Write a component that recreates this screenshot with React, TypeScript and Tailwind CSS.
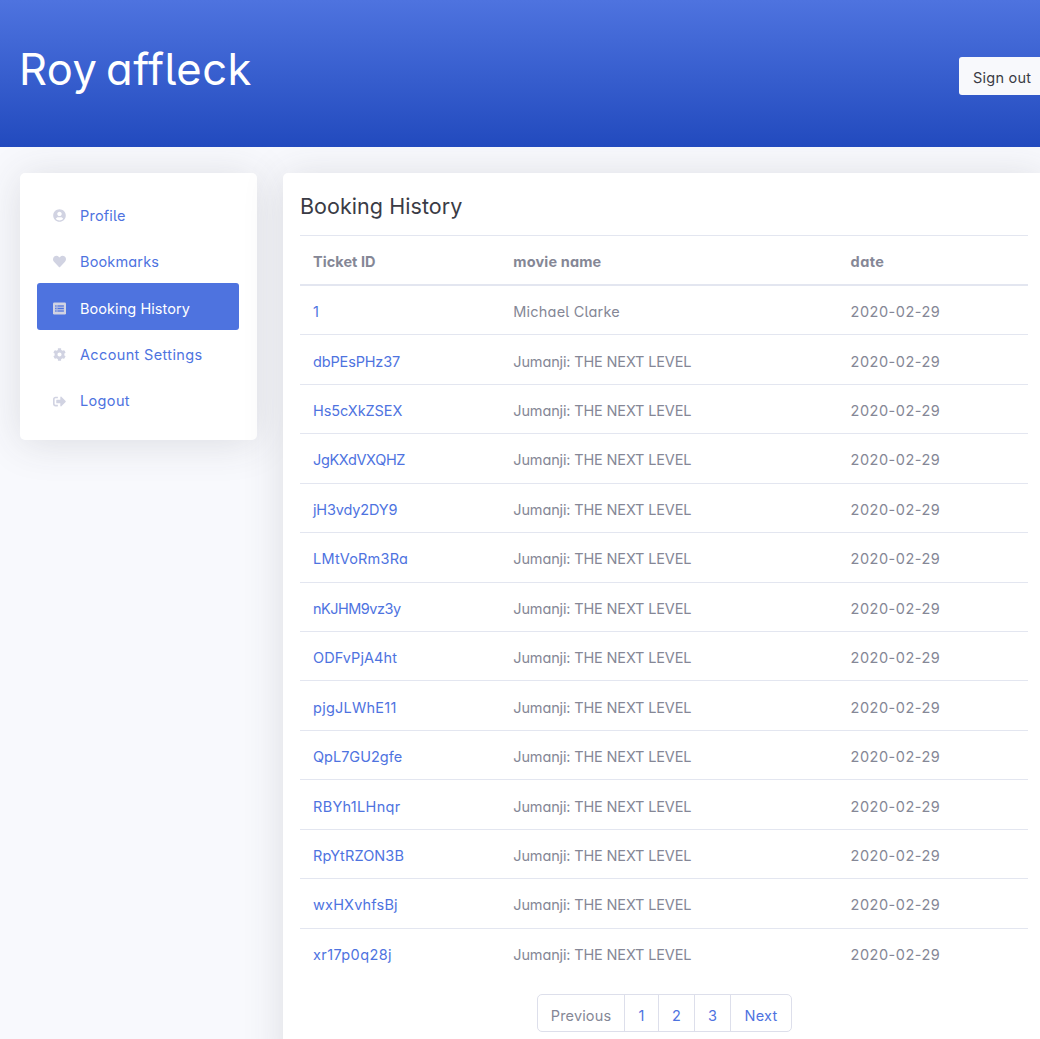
import { FaUserCircle, FaHeart, FaCog, FaSignOutAlt } from "react-icons/fa";

const menu = [
  { label: "Profile", icon: FaUserCircle, tracking: "tracking-[0.2px]" },
  { label: "Bookmarks", icon: FaHeart, tracking: "tracking-[0.15px]" },
  { label: "Booking History", icon: ListIcon, tracking: "tracking-[0.07px]", active: true },
  { label: "Account Settings", icon: FaCog, tracking: "tracking-[0.36px]" },
  { label: "Logout", icon: FaSignOutAlt, tracking: "tracking-[0.35px]" },
];

const tickets = [
  { id: "1", tracking: "tracking-normal" },
  { id: "dbPEsPHz37", tracking: "tracking-[-0.15px]" },
  { id: "Hs5cXkZSEX", tracking: "tracking-[-0.07px]" },
  { id: "JgKXdVXQHZ", tracking: "tracking-[-0.36px]" },
  { id: "jH3vdy2DY9", tracking: "tracking-[-0.15px]" },
  { id: "LMtVoRm3Ra", tracking: "tracking-[0.2px]" },
  { id: "nKJHM9vz3y", tracking: "tracking-[-0.52px]" },
  { id: "ODFvPjA4ht", tracking: "tracking-[0.07px]" },
  { id: "pjgJLWhE11", tracking: "tracking-[0.25px]" },
  { id: "QpL7GU2gfe", tracking: "tracking-normal" },
  { id: "RBYh1LHnqr", tracking: "tracking-[0.3px]" },
  { id: "RpYtRZON3B", tracking: "tracking-[0.1px]" },
  { id: "wxHXvhfsBj", tracking: "tracking-[0.18px]" },
  { id: "xr17p0q28j", tracking: "tracking-[0.4px]" },
];

function ListIcon({ className }: { className?: string }) {
  return (
    <svg viewBox="0 0 13 13" fill="none" className={className}>
      <rect y="0.5" width="13" height="12" rx="1.2" fill="currentColor" />
      <rect x="2" y="3" width="9" height="7" fill="#4e73df" fillOpacity="0.3" />
      <path d="M2.2 4h1.2M2.2 6.5h1.2M2.2 9h1.2M4.6 4h6.2M4.6 6.5h6.2M4.6 9h6.2" stroke="#4e73df" strokeWidth="1" />
    </svg>
  );
}

export default function App() {
  return (
    <div className="h-[1039px] w-full overflow-hidden bg-[#f8f9fd] font-['Inter',sans-serif] text-[14.5px] text-[#858796] [font-feature-settings:'cv11','cv05']">
      <header className="relative z-10 flex h-[147px] items-start justify-between bg-linear-to-b from-[#4e73df] to-[#224abe] pl-5">
        <h1 className="mt-[36px] -ml-px whitespace-nowrap text-[43.5px] leading-[66px] font-normal tracking-[0.45px] [word-spacing:-4px] text-white">Roy affleck</h1>
        <button className="mt-[57px] -mr-1 h-[38px] w-[85px] shrink-0 rounded-[3px] bg-[#f8f9fc] pt-[3px] pl-[14px] text-left tracking-[0.25px] whitespace-nowrap text-[#3a3b45]">Sign out</button>
      </header>
      <div className="flex w-[1045px] items-start gap-[26px] pt-[26px] pl-5">
        <nav className="h-[267px] w-[237px] shrink-0 rounded-[5px] bg-white px-[17px] pt-[17.4px] shadow-[0_3px_40px_rgba(58,59,69,0.15)]">
          {menu.map(({ label, icon: Icon, active, tracking }) => (
            <a key={label} className={`flex h-[46.4px] w-[202px] items-center rounded-[3px] pl-4 ${active ? "bg-[#4e73df] pt-px text-white" : "text-[#4e73df]"}`}>
              <Icon className="mt-[4px] mr-[14px] h-[13px] w-[13px] text-[#d1d3e2]" />
              <span className={`mt-[4px] whitespace-nowrap ${tracking}`}>{label}</span>
            </a>
          ))}
        </nav>
        <main className="h-[900px] w-[762px] shrink-0 rounded-[5px] bg-white px-[17px] shadow-[0_3px_40px_rgba(58,59,69,0.15)]">
          <h2 className="flex h-[62px] items-center pt-1 text-[21.5px] tracking-[0.05px] text-[#3a3b45]">Booking History</h2>
          <div className="w-[728px]">
            <div className="grid h-[51px] grid-cols-[200.3px_337.3px_1fr] items-center border-t border-b-2 border-[#e3e6f0] pt-[4px] font-bold">
              <span className="pl-[13px] tracking-[0.05px]">Ticket ID</span>
              <span className="pl-[13px] tracking-[0.15px]">movie name</span>
              <span className="pl-[13px] tracking-[0.4px]">date</span>
            </div>
            {tickets.map(({ id, tracking }, i) => (
              <div key={id} className={`grid grid-cols-[200.3px_337.3px_1fr] items-center ${i ? "h-[49.44px] border-t border-[#e3e6f0] pt-[3.8px]" : "h-[48.38px] pt-[3px]"}`}>
                <a className={`pl-[13px] text-[#4e73df] ${tracking}`}>{id}</a>
                <span className={`pl-[13px] ${i ? "tracking-[-0.15px]" : "tracking-[0.2px]"}`}>{i ? "Jumanji: THE NEXT LEVEL" : "Michael Clarke"}</span>
                <span className="pl-[13px] tracking-[0.5px]">2020-02-29</span>
              </div>
            ))}
          </div>
          <div className="mt-[17px] ml-[237px] flex h-[38px] w-[255px] rounded-[5px] border border-[#dddfeb] leading-[42px] text-[#4e73df]">
            <span className="w-[87px] border-r border-[#dddfeb] text-center tracking-[0.15px] text-[#858796]">Previous</span>
            <span className="w-[34px] border-r border-[#dddfeb] text-center">1</span>
            <span className="w-9 border-r border-[#dddfeb] text-center">2</span>
            <span className="w-9 border-r border-[#dddfeb] text-center">3</span>
            <span className="flex-1 text-center tracking-[0.2px]">Next</span>
          </div>
        </main>
      </div>
    </div>
  );
}
